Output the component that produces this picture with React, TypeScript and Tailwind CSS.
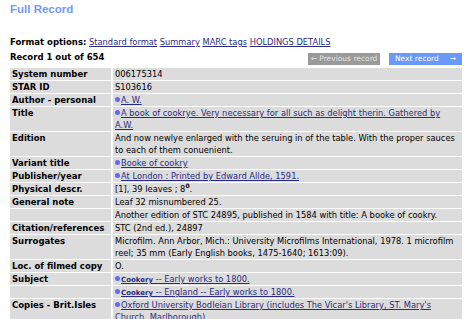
import React from "react";

const Bullet = () => (
  <span className="inline-block w-[5px] h-[5px] rounded-full bg-[#6666ff] mr-[1px] align-[1px]" />
);

const L = ({ children }: { children: React.ReactNode }) => (
  <span className="text-[#2b2b80] underline">{children}</span>
);

type Row = { label: string; value: React.ReactNode };

const rows: Row[] = [
  { label: "System number", value: "006175314" },
  { label: "STAR ID", value: "S103616" },
  { label: "Author - personal", value: (<><Bullet /><L>A. W.</L></>) },
  {
    label: "Title",
    value: (
      <>
        <Bullet />
        <L>A book of cookrye. Very necessary for all such as delight therin. Gathered by<br />A.W.</L>
      </>
    ),
  },
  {
    label: "Edition",
    value: (<>And now newlye enlarged with the seruing in of the table. With the proper sauces<br />to each of them conuenient.</>),
  },
  { label: "Variant title", value: (<><Bullet /><L>Booke of cookry</L></>) },
  { label: "Publisher/year", value: (<><Bullet /><L>At London : Printed by Edward Allde, 1591.</L></>) },
  {
    label: "Physical descr.",
    value: (<>[1], 39 leaves ; 8<span className="text-[6px] font-bold leading-none relative top-[-4px]">0</span>.</>),
  },
  { label: "General note", value: "Leaf 32 misnumbered 25." },
  { label: "", value: "Another edition of STC 24895, published in 1584 with title: A booke of cookry." },
  { label: "Citation/references", value: "STC (2nd ed.), 24897" },
  {
    label: "Surrogates",
    value: (<>Microfilm. Ann Arbor, Mich.: University Microfilms International, 1978. 1 microfilm<br />reel; 35 mm (Early English books, 1475-1640; 1613:09).</>),
  },
  { label: "Loc. of filmed copy", value: "O." },
  {
    label: "Subject",
    value: (<><Bullet /><L><b className="text-[7px] leading-none">Cookery</b> -- Early works to 1800.</L></>),
  },
  {
    label: "",
    value: (<><Bullet /><L><b className="text-[7px] leading-none">Cookery</b> -- England -- Early works to 1800.</L></>),
  },
  {
    label: "Copies - Brit.Isles",
    value: (
      <>
        <Bullet />
        <L>Oxford University Bodleian Library (includes The Vicar's Library, ST. Mary's<br />Church, Marlborough)</L>
      </>
    ),
  },
];

export default function App() {
  return (
    <div className="w-[471px] h-[319px] overflow-hidden bg-white text-black font-['DejaVu_Sans',Verdana,sans-serif] text-[8.3px] leading-[12px]">
      <div className="pl-[10px] pt-[2px]">
        <div className="font-['Liberation_Sans',Arial,sans-serif] font-bold text-[11.5px] leading-[14px] text-[#6e9bf7]">
          Full Record
        </div>
        <div className="mt-[20px] whitespace-nowrap">
          <b className="text-[8.5px]">Format options:</b> <L>Standard format</L> <L>Summary</L> <L>MARC tags</L> <L>HOLDINGS DETAILS</L>
        </div>
        <div className="flex items-end w-[452px] mt-[3px] h-[13px]">
          <b className="flex-1 text-[8.5px] self-start">Record 1 out of 654</b>
          <div className="flex gap-[9px] text-[7.5px] leading-[12px] mb-[-1px]">
            <div className="w-[72px] h-[12px] bg-[#9a9a9a] text-[#e4e4e4] text-center">
              ← Previous record
            </div>
            <div className="w-[73px] h-[12px] bg-[#6a9af7] text-white flex justify-between px-[6px]">
              <span>Next record</span>
              <span>→</span>
            </div>
          </div>
        </div>
        <div className="mt-[4px] grid grid-cols-[101px_349px] auto-rows-min gap-x-[2px] gap-y-[1px]">
          {rows.map((r, i) => (
            <React.Fragment key={i}>
              <div className="bg-[#dcdcdc] px-[2px] font-bold whitespace-nowrap text-[8.5px]">{r.label}</div>
              <div className="bg-[#dcdcdc] px-[2px] whitespace-nowrap overflow-hidden">{r.value}</div>
            </React.Fragment>
          ))}
        </div>
      </div>
    </div>
  );
}
